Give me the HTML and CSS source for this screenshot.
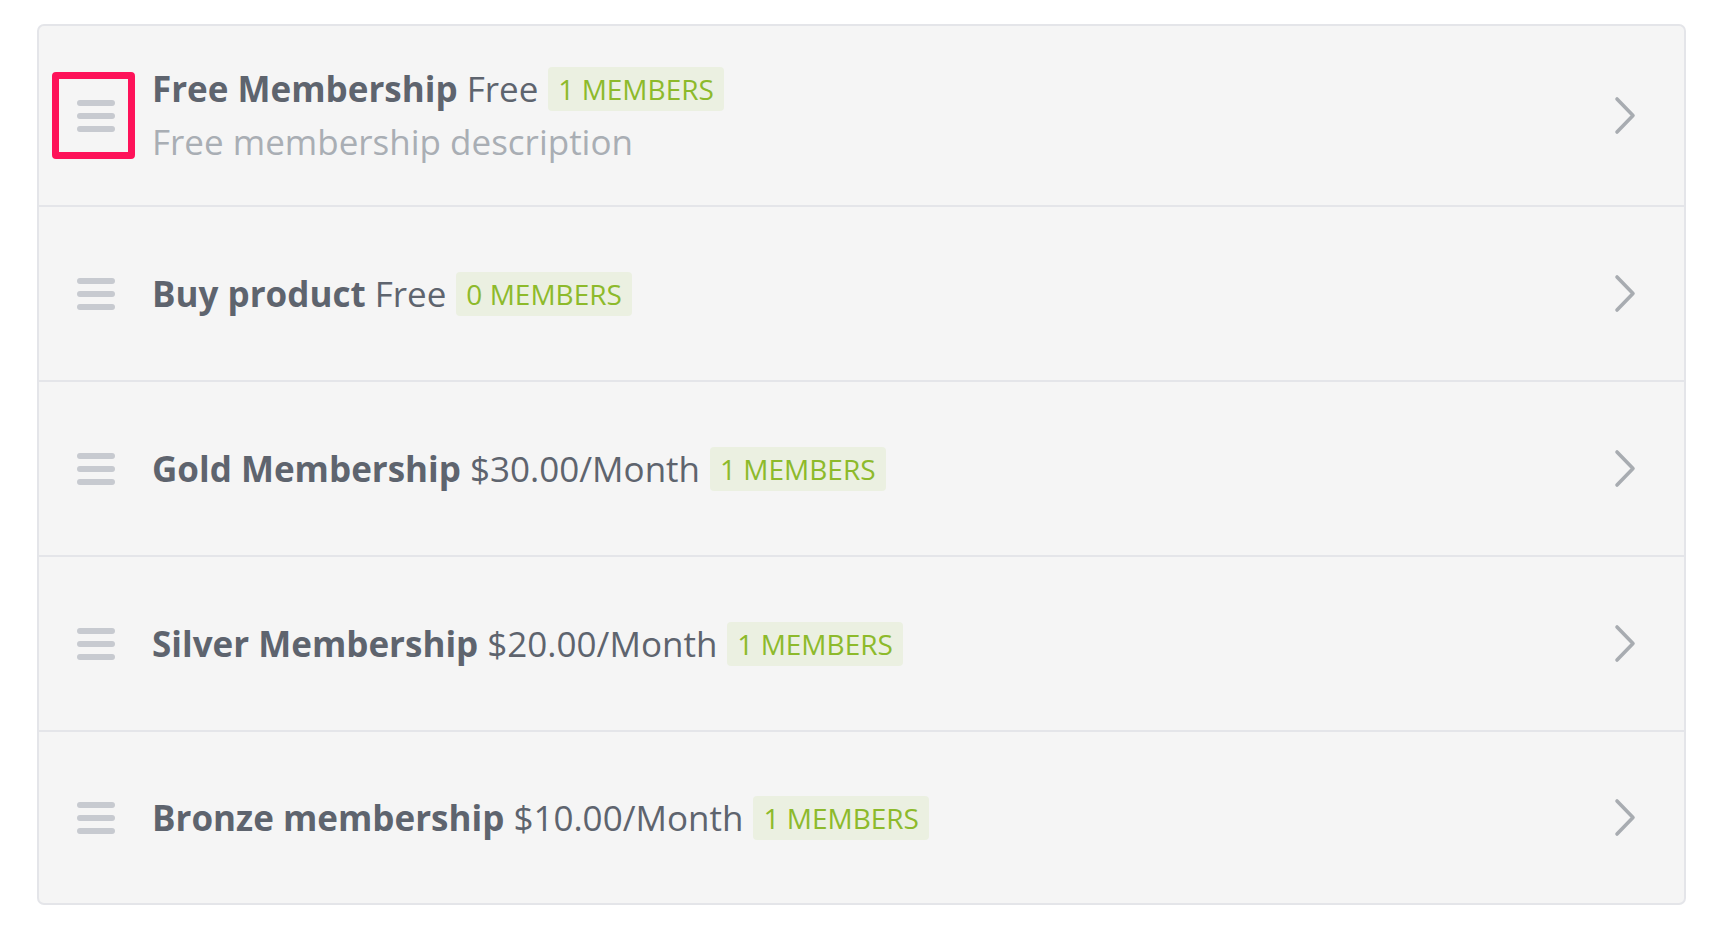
FILE: index.html
```html
<!DOCTYPE html>
<html lang="en">
<head>
<meta charset="utf-8">
<title>Memberships</title>
<link rel="stylesheet" href="styles.css">
</head>
<body>
<div class="card">
  <div class="row row-first">
    <button class="handle focused" aria-label="Reorder">
      <span class="bars"><i></i><i></i><i></i></span>
    </button>
    <div class="info">
      <div class="title-line">
        <span class="label"><b class="name">Free Membership</b> Free</span>
        <span class="badge">1 MEMBERS</span>
      </div>
      <div class="desc">Free membership description</div>
    </div>
    <svg class="chev" width="24" height="42" viewBox="0 0 24 42"><path d="M4 4 L20 20.5 L4 37"/></svg>
  </div>
  <div class="row">
    <button class="handle" aria-label="Reorder">
      <span class="bars"><i></i><i></i><i></i></span>
    </button>
    <div class="info">
      <div class="title-line">
        <span class="label"><b class="name">Buy product</b> Free</span>
        <span class="badge">0 MEMBERS</span>
      </div>
    </div>
    <svg class="chev" width="24" height="42" viewBox="0 0 24 42"><path d="M4 4 L20 20.5 L4 37"/></svg>
  </div>
  <div class="row">
    <button class="handle" aria-label="Reorder">
      <span class="bars"><i></i><i></i><i></i></span>
    </button>
    <div class="info">
      <div class="title-line">
        <span class="label"><b class="name">Gold Membership</b> $30.00/Month</span>
        <span class="badge">1 MEMBERS</span>
      </div>
    </div>
    <svg class="chev" width="24" height="42" viewBox="0 0 24 42"><path d="M4 4 L20 20.5 L4 37"/></svg>
  </div>
  <div class="row">
    <button class="handle" aria-label="Reorder">
      <span class="bars"><i></i><i></i><i></i></span>
    </button>
    <div class="info">
      <div class="title-line">
        <span class="label"><b class="name">Silver Membership</b> $20.00/Month</span>
        <span class="badge">1 MEMBERS</span>
      </div>
    </div>
    <svg class="chev" width="24" height="42" viewBox="0 0 24 42"><path d="M4 4 L20 20.5 L4 37"/></svg>
  </div>
  <div class="row row-last">
    <button class="handle" aria-label="Reorder">
      <span class="bars"><i></i><i></i><i></i></span>
    </button>
    <div class="info">
      <div class="title-line">
        <span class="label"><b class="name">Bronze membership</b> $10.00/Month</span>
        <span class="badge">1 MEMBERS</span>
      </div>
    </div>
    <svg class="chev" width="24" height="42" viewBox="0 0 24 42"><path d="M4 4 L20 20.5 L4 37"/></svg>
  </div>
</div>
</body>
</html>
```

FILE: styles.css
```css
* { box-sizing: border-box; }

html, body {
  margin: 0;
  padding: 0;
  background: #ffffff;
}

body {
  font-family: "Open Sans", "Noto Sans", sans-serif;
  padding: 24px 0 0 37px;
}

.card {
  width: 1649px;
  height: 881px;
  border: 2px solid #e4e5e9;
  border-radius: 7px;
  background: #f5f5f5;
  overflow: hidden;
}

.row {
  display: flex;
  align-items: center;
  height: 175px;
  padding-left: 13px;
  border-bottom: 2px solid #e4e5e9;
}

.row-first { height: 181px; }

.row-last {
  height: 171px;
  border-bottom: none;
}

.handle {
  display: flex;
  align-items: center;
  justify-content: center;
  width: 83px;
  height: 87px;
  padding: 0 0 0 5px;
  margin: 0;
  border: 7px solid transparent;
  border-radius: 4px;
  background: transparent;
  cursor: grab;
}

.handle.focused { border-color: #fe1259; }

.bars {
  display: flex;
  flex-direction: column;
  gap: 7px;
}

.bars i {
  display: block;
  width: 38px;
  height: 6px;
  border-radius: 3px;
  background: #c7cad0;
}

.info {
  display: flex;
  flex-direction: column;
  margin-left: 17px;
}

.title-line {
  display: flex;
  align-items: center;
}

.label {
  font-size: 35px;
  line-height: 44px;
  color: #5e646e;
  white-space: nowrap;
}

.name { font-weight: 700; }

.badge {
  display: inline-flex;
  align-items: center;
  height: 44px;
  margin-left: 10px;
  padding: 0 10px;
  border-radius: 4px;
  background: #ebf0e1;
  color: #8dba2b;
  font-size: 28px;
  line-height: 44px;
  white-space: nowrap;
}

.desc {
  margin-top: 9px;
  font-size: 35px;
  line-height: 44px;
  color: #a9aeb4;
}

.chev {
  margin-left: auto;
  margin-right: 47px;
  flex: none;
}

.chev path {
  fill: none;
  stroke: #a8acb1;
  stroke-width: 3.6;
  stroke-linecap: round;
  stroke-linejoin: round;
}
```
